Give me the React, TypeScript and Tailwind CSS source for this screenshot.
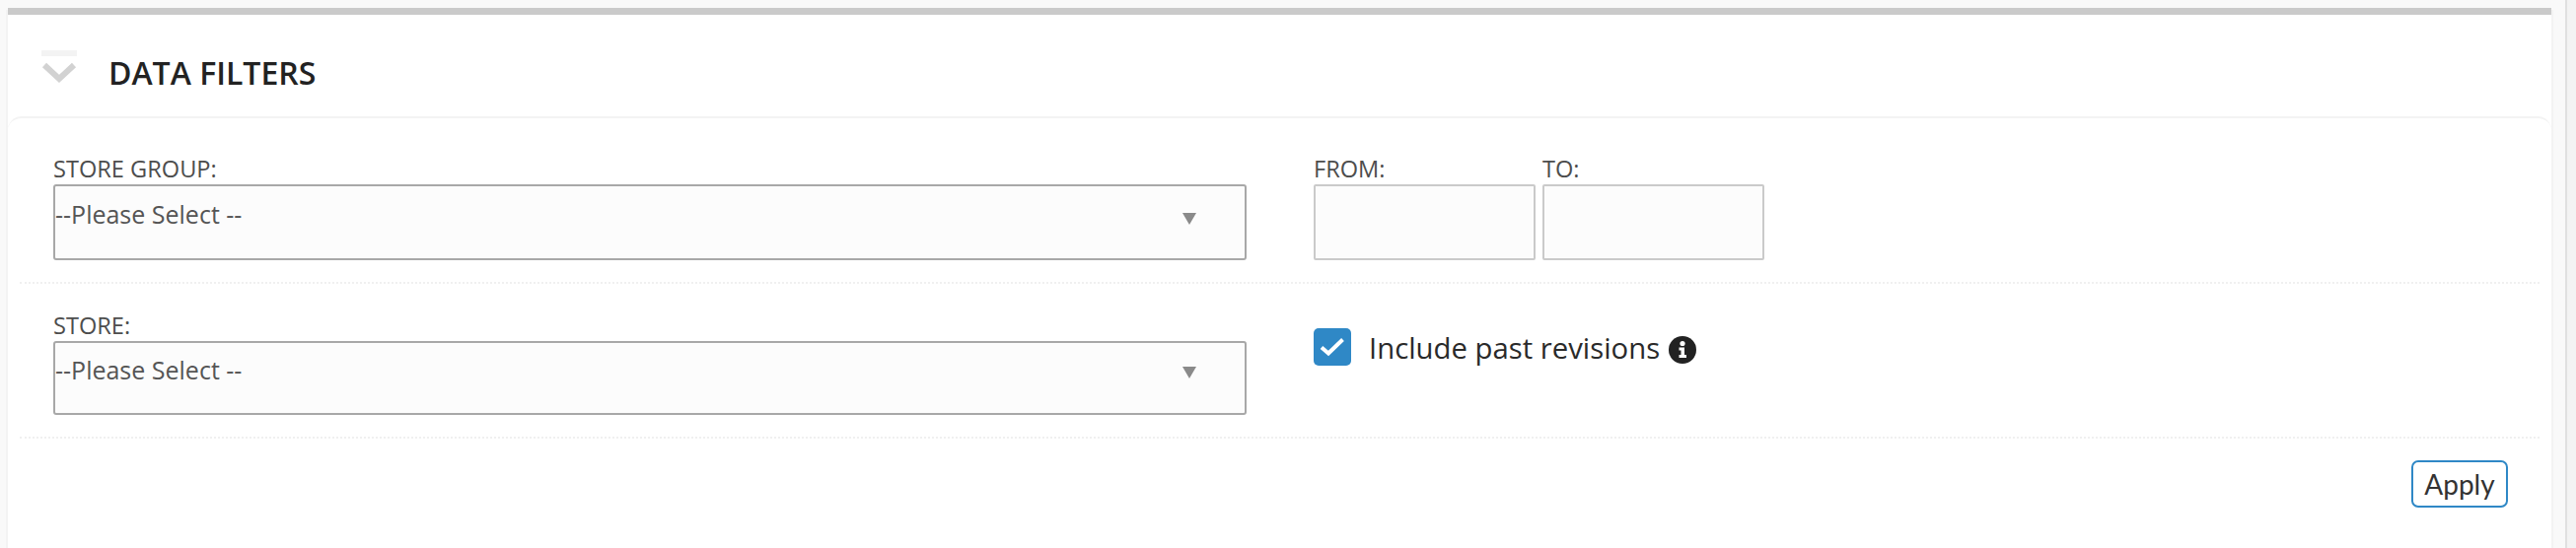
const font = "font-['Open_Sans',sans-serif]";

function Caret({ top }: { top: string }) {
  return (
    <svg width="14" height="12" viewBox="0 0 14 12" className={`absolute right-[49px] ${top}`}>
      <path d="M0 0H14L7 12Z" fill="#8a8a8a" />
    </svg>
  );
}

function SelectField({ label, h, pt, caretTop }: { label: string; h: string; pt: string; caretTop: string }) {
  return (
    <div className="w-[1210px] shrink-0">
      <div className="h-[27px] text-[23.6px] leading-[23px] text-[#4d4d4d]">{label}</div>
      <div className={`relative ${h} ${pt} rounded-[3px] border-2 border-[#a8a8a8] bg-[#fcfcfc] text-[25px] leading-[34px] text-[#555]`}>
        --Please Select --
        <Caret top={caretTop} />
      </div>
    </div>
  );
}

function DateField({ label }: { label: string }) {
  return (
    <div className="w-[225px]">
      <div className="h-[27px] text-[23.6px] leading-[23px] text-[#4d4d4d]">{label}</div>
      <div className="h-[77px] rounded-[2px] border-2 border-[#cacaca] bg-[#fcfcfc]" />
    </div>
  );
}

export default function App() {
  return (
    <div className={`flex h-[556px] w-full overflow-hidden bg-[#f9f9f9] ${font}`}>
      <main className="flex-1 pl-2 pr-[14px] pt-2">
        <div className="h-[600px] border-t-[7px] border-[#cacaca] bg-white shadow-[-2px_2px_0_#f3f3f3,2px_2px_0_#f3f3f3]">
          <header className="flex h-[103px] items-center pl-[34px]">
            <svg width="36" height="36" viewBox="0 0 36 36" className="mr-[32px] mt-[4px]">
              <rect x="0" y="0" width="36" height="6" fill="#f3f3f3" />
              <path d="M3 15L18 29L33 15" fill="none" stroke="#d2d2d2" strokeWidth="6" className="blur-[0.5px]" />
            </svg>
            <h2 className="mt-[15px] text-[32px] font-semibold leading-none text-[#222]">DATA FILTERS</h2>
          </header>
          <section className="rounded-t-[14px] border-t-2 border-[#f3f3f3] px-3">
            <div className="flex h-[168px] gap-[68px] border-b-2 border-dotted border-[#f0f0f0] pl-[34px] pt-[40px]">
              <SelectField label="STORE GROUP:" h="h-[77px]" pt="pt-[11px]" caretTop="top-[27px]" />
              <div className="flex gap-[7px]">
                <DateField label="FROM:" />
                <DateField label="TO:" />
              </div>
            </div>
            <div className="flex h-[157px] gap-[68px] border-b-2 border-dotted border-[#f0f0f0] pl-[34px] pt-[31px]">
              <SelectField label="STORE:" h="h-[75px]" pt="pt-[10px]" caretTop="top-[24px]" />
              <div className="flex items-start pt-[14px]">
                <label className="flex items-center text-[29.3px] leading-[38px] text-[#2a2a2a]">
                  <span className="mr-[18px] flex h-[38px] w-[38px] items-center justify-center rounded-[5px] bg-[#2f88c6]">
                    <svg width="26" height="20" viewBox="0 0 26 20">
                      <path d="M2 10.5L9 16.5L23.5 2.5" fill="none" stroke="#fff" strokeWidth="4" />
                    </svg>
                  </span>
                  <span className="relative top-[1px]">Include past revisions</span>
                  <svg width="28" height="28" viewBox="0 0 28 28" className="ml-[9px] mt-[6px]">
                    <circle cx="14" cy="14" r="14" fill="#222" />
                    <circle cx="14" cy="7.5" r="2.6" fill="#fff" />
                    <path d="M10.5 11.5H16V19H18V22H10.5V19H12.5V14.5H10.5Z" fill="#fff" />
                  </svg>
                </label>
              </div>
            </div>
            <div className="flex justify-end pr-[32px] pt-[22px]">
              <button className="h-[48px] w-[98px] rounded-[7px] border-2 border-[#2f88c6] bg-white font-['Lato',sans-serif] text-[28px] leading-none text-[#333]">
                Apply
              </button>
            </div>
          </section>
        </div>
      </main>
      <div className="w-[11px] border-l-2 border-[#e0e0e0] bg-[#f3f3f3]" />
    </div>
  );
}
